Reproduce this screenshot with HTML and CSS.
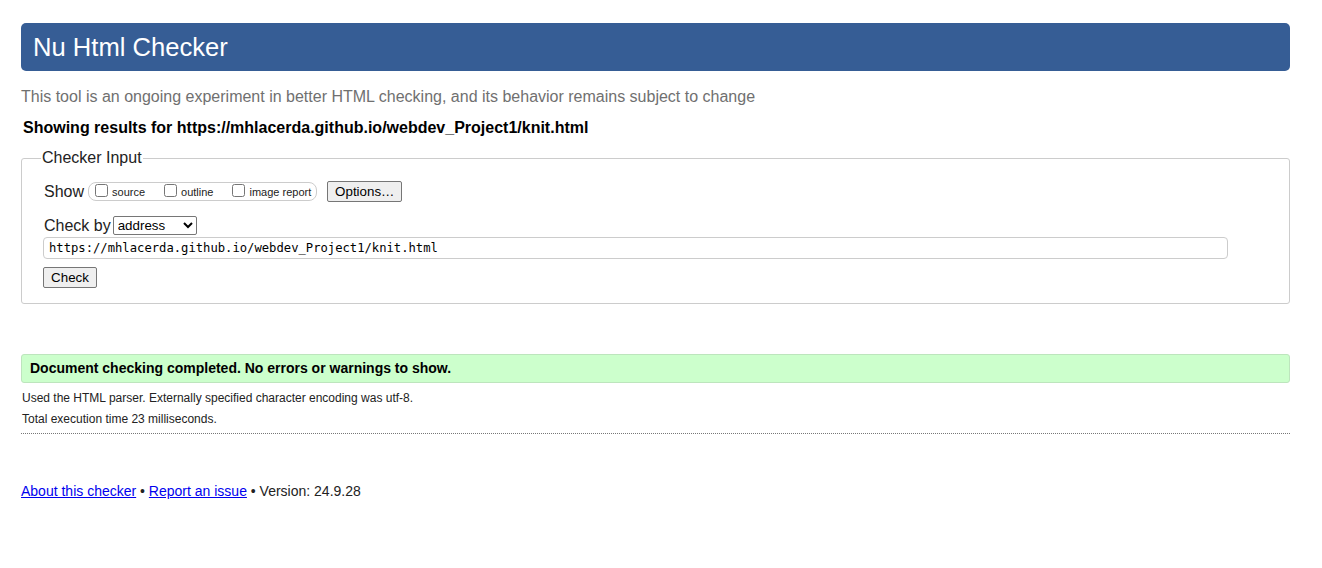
FILE: index.html
```html
<!DOCTYPE html>
<html lang="en">
<head>
<meta charset="utf-8">
<title>Nu Html Checker</title>
<link rel="stylesheet" href="styles.css">
</head>
<body>
<h1 class="title">Nu Html Checker</h1>
<p class="intro">This tool is an ongoing experiment in better HTML checking, and its behavior remains subject to change</p>
<p class="showing">Showing results for https://mhlacerda.github.io/webdev_Project1/knit.html</p>
<form class="checker">
  <fieldset class="input-set">
    <legend class="legend">Checker Input</legend>
    <div class="row show-row">
      <span class="label">Show</span>
      <fieldset class="opts">
        <label class="opt"><input type="checkbox" class="cb"><span>source</span></label>
        <label class="opt"><input type="checkbox" class="cb"><span>outline</span></label>
        <label class="opt"><input type="checkbox" class="cb"><span>image report</span></label>
      </fieldset>
      <button type="button" class="btn options-btn">Options…</button>
    </div>
    <div class="row by-row">
      <span class="label">Check by</span>
      <select class="sel"><option>address</option></select>
    </div>
    <input class="url" type="text" value="https://mhlacerda.github.io/webdev_Project1/knit.html">
    <div class="row">
      <button type="button" class="btn check-btn">Check</button>
    </div>
  </fieldset>
</form>
<div class="success">Document checking completed. No errors or warnings to show.</div>
<p class="details">Used the HTML parser. Externally specified character encoding was utf-8.</p>
<p class="details">Total execution time 23 milliseconds.</p>
<hr class="sep">
<p class="footer"><a href="#">About this checker</a> • <a href="#">Report an issue</a> • Version: 24.9.28</p>
</body>
</html>
```
FILE: styles.css
```css
html, body {
  background: #fff;
}
body {
  margin: 0;
  padding: 23px 32px 0 21px;
  font-family: "Liberation Sans", Arial, sans-serif;
  color: #000;
  font-size: 16px;
}
.title {
  margin: 0;
  height: 48px;
  line-height: 48px;
  padding: 0 12px;
  background: #365d95;
  color: #fff;
  font-weight: normal;
  font-size: 25.6px;
  border-radius: 5px;
}
.intro {
  margin: 17px 0 0;
  color: #707070;
  font-size: 16px;
  line-height: 18px;
}
.showing {
  margin: 13px 0 0 2px;
  font-weight: bold;
  font-size: 16px;
  line-height: 18px;
}
.checker {
  margin: 0;
}
.input-set {
  margin: 12px 0 0;
  padding: 13px 22px 15px 22px;
  border: 1px solid #cccccc;
  border-radius: 3px;
}
.legend {
  padding: 0 1px;
  margin-left: -3px;
  font-size: 16px;
  color: #222;
}
.row {
  display: flex;
  align-items: center;
}
.label {
  font-size: 16px;
  color: #222;
}
.show-row {
  height: 23px;
}
.opts {
  display: flex;
  align-items: center;
  margin: 0 0 0 4px;
  padding: 0 5px 0 6px;
  height: 17px;
  border: 1px solid #cccccc;
  border-radius: 8px;
}
.opt {
  display: flex;
  align-items: center;
  font-size: 11px;
  margin-right: 19px;
  color: #222;
}
.opt:last-child {
  margin-right: 0;
}
.cb {
  width: 13px;
  height: 13px;
  margin: 0 4px 3px 0;
}
.btn {
  font-family: "Liberation Sans", Arial, sans-serif;
  font-size: 13.33px;
  background: #efefef;
  border: 1px solid #767676;
  border-radius: 2px;
  color: #000;
  padding: 1px 6px;
  height: 21px;
}
.options-btn {
  margin-left: 10px;
  width: 75px;
}
.by-row {
  margin-top: 12px;
  height: 21px;
}
.sel {
  margin-left: 2px;
  width: 84px;
  height: 19px;
  font-family: "Liberation Sans", Arial, sans-serif;
  font-size: 13.33px;
  border: 1px solid #767676;
  border-radius: 2px;
  background: #fff;
  color: #000;
}
.url {
  display: block;
  box-sizing: border-box;
  margin: 1px 0 0 -1px;
  width: 1185px;
  height: 22px;
  padding: 0 5px;
  border: 1px solid #cccccc;
  border-radius: 4px;
  font-family: "DejaVu Sans Mono", "Liberation Mono", monospace;
  font-size: 12.2px;
  color: #000;
}
.url:focus {
  outline: none;
}
.row:last-child {
  margin-top: 8px;
}
.check-btn {
  margin-left: -1px;
  width: 54px;
}
.success {
  margin-top: 50px;
  height: 27px;
  line-height: 27px;
  padding: 0 8px;
  background: #ccffcc;
  border: 1px solid #bde5bd;
  border-radius: 3px;
  font-weight: bold;
  font-size: 14px;
  color: #000;
}
.details {
  margin: 8px 0 0 1px;
  font-size: 12px;
  line-height: 14px;
  color: #222;
}
.details + .details {
  margin-top: 7px;
}
.sep {
  margin: 7px 0 0;
  border: 0;
  border-top: 1px dotted #777;
  height: 0;
}
.footer {
  margin: 49px 0 0;
  font-size: 14px;
  line-height: 16px;
  color: #222;
}
.footer a {
  color: #0000ee;
}
```
